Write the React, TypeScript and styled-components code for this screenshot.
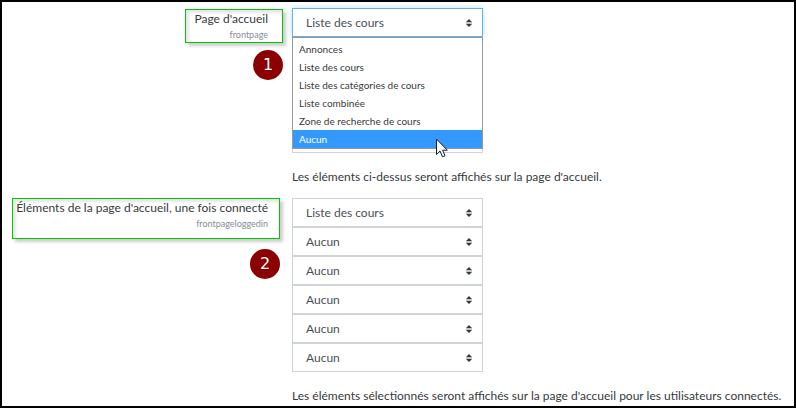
import React from "react";
import styled, { createGlobalStyle, css } from "styled-components";

const GlobalStyle = createGlobalStyle`
  *, *::before, *::after { box-sizing: border-box; }
  body {
    margin: 0;
    background: #fff;
    color: #373a3c;
    font-family: Lato, "Open Sans", sans-serif;
    font-size: 12px;
    line-height: 18px;
  }
`;

const Page = styled.main`
  min-height: 100vh;
  padding: 6px 10px 0;
  border: 2px solid #000;
`;

const Setting = styled.section`
  display: grid;
  grid-template-columns: minmax(0, 271px) minmax(0, 1fr);
  column-gap: 9px;
  & + & {
    margin-top: 12px;
  }
`;

const LabelColumn = styled.div`
  display: flex;
  flex-direction: column;
  align-items: flex-end;
`;

const Frame = styled.div<{ $wide?: boolean }>`
  position: relative;
  margin-top: ${(p) => (p.$wide ? 0 : 1)}px;
  margin-right: ${(p) => (p.$wide ? 3 : 0)}px;
  width: ${(p) => (p.$wide ? "100%" : "auto")};
  max-width: ${(p) => (p.$wide ? 268 : 271)}px;
  height: ${(p) => (p.$wide ? 41 : 34)}px;
  padding-right: ${(p) => (p.$wide ? 11 : 14)}px;
  padding-left: ${(p) => (p.$wide ? 0 : 8)}px;
  border: 1px solid #00c800;
  box-shadow: 3px 3px 3px rgba(0, 0, 0, 0.2), inset 3px 3px 3px rgba(0, 0, 0, 0.1);
  display: flex;
  flex-direction: column;
  align-items: flex-end;
  white-space: nowrap;
`;

const Label = styled.label`
  line-height: 18px;
`;

const Key = styled.span`
  color: #868e96;
  font-size: 9px;
  line-height: 14px;
`;

const Badge = styled.span<{ $wide?: boolean }>`
  position: absolute;
  top: ${(p) => (p.$wide ? 50 : 40)}px;
  right: -1px;
  width: 30px;
  height: 30px;
  border-radius: 50%;
  background: #8b0000;
  color: #fff;
  font-family: "DejaVu Sans", sans-serif;
  font-size: 16px;
  line-height: 30px;
  text-align: center;
`;

const Field = styled.div`
  min-width: 0;
`;

const Stack = styled.div`
  position: relative;
  width: 191px;
  max-width: 100%;
`;

const SelectBox = styled.div`
  display: grid;
  align-items: center;
  > * {
    grid-area: 1 / 1;
  }
`;

const Select = styled.select<{ $focused?: boolean }>`
  appearance: none;
  width: 100%;
  height: 29px;
  margin: 0;
  padding: 0 24px 0 13px;
  border: 1px solid #ced4da;
  border-radius: 0;
  outline: none;
  background: #fff;
  color: #495057;
  font: inherit;
  ${(p) =>
    p.$focused &&
    css`
      border-color: #66afe9;
      box-shadow: 0 0 6px rgba(102, 175, 233, 0.4);
    `}
`;

const Caret = styled.svg`
  justify-self: end;
  margin-right: 11px;
  pointer-events: none;
`;

const Menu = styled.ul`
  position: absolute;
  top: 29px;
  left: 0;
  right: 0;
  margin: 0;
  padding: 2px 0 0;
  border: 1px solid #999;
  background: #fff;
  color: #373a3c;
  list-style: none;
  font-size: 10px;
`;

const Option = styled.li<{ $active?: boolean }>`
  height: 18px;
  padding: 0 6px;
  line-height: 18px;
  ${(p) =>
    p.$active &&
    css`
      background: #3399ff;
      color: #fff;
    `}
`;

const Pointer = styled.svg`
  position: absolute;
  right: 34px;
  bottom: -10px;
`;

const Help = styled.p`
  margin: 15px 0 0;
  line-height: 18px;
`;

const ITEMS = [
  "Annonces",
  "Liste des cours",
  "Liste des catégories de cours",
  "Liste combinée",
  "Zone de recherche de cours",
  "Aucun",
];

type SelectListProps = {
  id: string;
  label: string;
  values: string[];
  open?: boolean;
};

function SelectList({ id, label, values, open }: SelectListProps) {
  return (
    <Stack>
      {values.map((value, i) => (
        <SelectBox key={i}>
          <Select
            id={i === 0 ? id : `${id}-${i}`}
            aria-label={i === 0 ? undefined : `${label} ${i + 1}`}
            defaultValue={value}
            $focused={open && i === 0}
          >
            {ITEMS.map((item) => (
              <option key={item}>{item}</option>
            ))}
          </Select>
          <Caret width="6" height="8" viewBox="0 0 6 8" aria-hidden="true">
            <path d="M0 3 3 0l3 3zM0 5l3 3 3-3z" fill="#343a40" />
            <path d="M0 3h6v2H0z" fill="#c4c6c8" />
          </Caret>
        </SelectBox>
      ))}
      {open && (
        <Menu role="listbox" aria-label={label}>
          {ITEMS.map((item) => (
            <Option
              key={item}
              role="option"
              aria-selected={item === "Aucun"}
              $active={item === "Aucun"}
            >
              {item}
            </Option>
          ))}
          <Pointer width="12" height="20" viewBox="0 0 12 20" aria-hidden="true">
            <path
              d="M.5 1v15.500l3.500-3.500 2.500 5.800 2.500-1.100-2.400-5.500h4.700z"
              fill="#fff"
              stroke="#111a33"
            />
          </Pointer>
        </Menu>
      )}
    </Stack>
  );
}

export default function App() {
  return (
    <>
      <GlobalStyle />
      <Page>
        <Setting>
          <LabelColumn>
            <Frame>
              <Label htmlFor="frontpage">Page d'accueil</Label>
              <Key>frontpage</Key>
              <Badge>1</Badge>
            </Frame>
          </LabelColumn>
          <Field>
            <SelectList
              id="frontpage"
              label="Page d'accueil"
              values={["Liste des cours", "Aucun", "Aucun", "Aucun", "Aucun"]}
              open
            />
            <Help>Les éléments ci-dessus seront affichés sur la page d'accueil.</Help>
          </Field>
        </Setting>
        <Setting>
          <LabelColumn>
            <Frame $wide>
              <Label htmlFor="frontpageloggedin">
                Éléments de la page d'accueil, une fois connecté
              </Label>
              <Key>frontpageloggedin</Key>
              <Badge $wide>2</Badge>
            </Frame>
          </LabelColumn>
          <Field>
            <SelectList
              id="frontpageloggedin"
              label="Éléments de la page d'accueil, une fois connecté"
              values={["Liste des cours", "Aucun", "Aucun", "Aucun", "Aucun", "Aucun"]}
            />
            <Help>
              Les éléments sélectionnés seront affichés sur la page d'accueil pour les
              utilisateurs connectés.
            </Help>
          </Field>
        </Setting>
      </Page>
    </>
  );
}
